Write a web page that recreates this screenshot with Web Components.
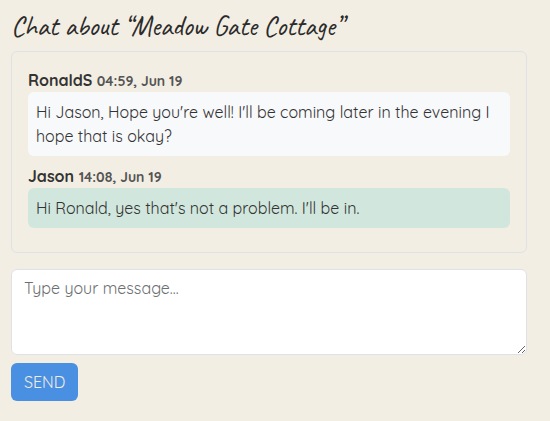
<!DOCTYPE html>
<html lang="en">
<head>
<meta charset="utf-8">
<title>Chat</title>
<style>
body { margin: 0; background: #f3eee3; color: #333; font: 16px/24px Quicksand, Lato, sans-serif; }
</style>
</head>
<body>
<chat-page>
  <chat-title slot="title">Chat about “Meadow Gate Cottage”</chat-title>
  <chat-thread>
    <chat-message>
      <span slot="name">RonaldS</span>
      <span slot="time">04:59, Jun 19</span>
      Hi Jason, Hope you're well! I'll be coming later in the evening I hope that is okay?
    </chat-message>
    <chat-message own>
      <span slot="name">Jason</span>
      <span slot="time">14:08, Jun 19</span>
      Hi Ronald, yes that's not a problem. I'll be in.
    </chat-message>
  </chat-thread>
  <message-form></message-form>
</chat-page>
<script>
function define(name, html) {
  customElements.define(name, class extends HTMLElement {
    constructor() {
      super();
      this.attachShadow({ mode: 'open' }).innerHTML = html;
    }
  });
}

define('chat-page', `<style>
  :host { display: flex; flex-direction: column; width: 516px; padding: 9px 0 0 11px; }
</style><slot name="title"></slot><slot></slot>`);

define('chat-title', `<style>
  :host { display: block; height: 42px; box-sizing: border-box; color: #2b2b2b;
    font: 500 28px/33.6px Caveat, Lato, sans-serif; letter-spacing: -.19px; }
</style><slot></slot>`);

define('chat-thread', `<style>
  :host { display: block; box-sizing: border-box; padding: 16px; border: 1px solid #dee2e6; border-radius: 6px; }
</style><slot></slot>`);

define('chat-message', `<style>
  :host { display: block; margin-bottom: 8px; }
  header { display: flex; gap: 4.5px; align-items: baseline; height: 24px; font-weight: 700; }
  .time { font-size: 14px; color: #555; }
  .bubble { padding: 8px; border-radius: 6px; background: #f8f9fb; }
  :host([own]) .bubble { background: #d1e7dd; }
</style>
<header><slot name="name"></slot><span class="time"><slot name="time"></slot></span></header>
<div class="bubble"><slot></slot></div>`);

define('message-form', `<style>
  :host { display: flex; flex-direction: column; align-items: flex-start; gap: 8px; margin-top: 16px; }
  textarea { display: block; box-sizing: border-box; width: 516px; height: 86px; margin: 0; padding: 6px 12px;
    border: 1px solid #dee2e6; border-radius: 6px; background: #fff; font: inherit; outline: 0; resize: vertical; }
  textarea::placeholder { color: #6c6f72; }
  button { height: 38px; padding: 0 13px; border: 0; border-radius: 6px; background: #4a90e2; color: #f2ede2; font: inherit; }
</style>
<textarea placeholder="Type your message..."></textarea>
<button type="button">SEND</button>`);
</script>
</body>
</html>
